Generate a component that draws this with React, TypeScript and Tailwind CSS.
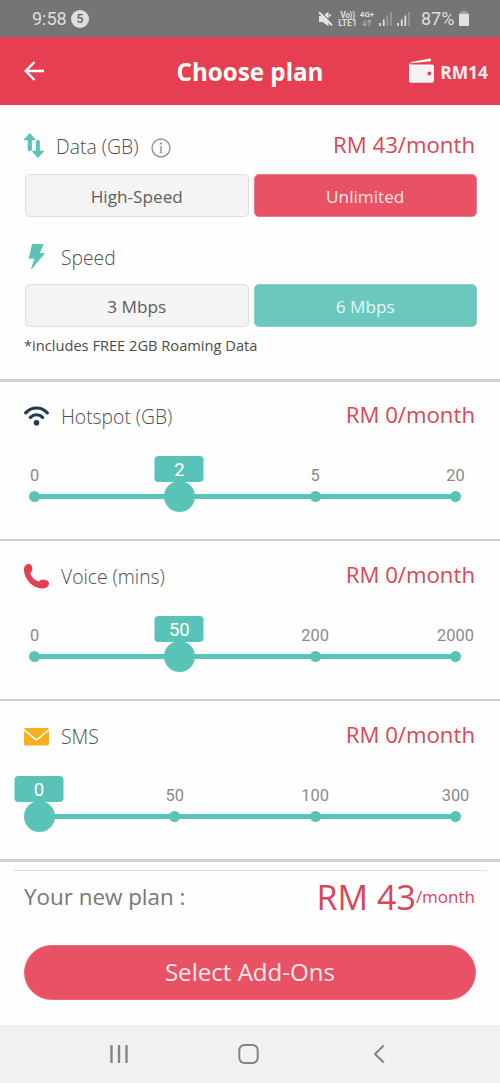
import type { ReactNode } from "react";

const sans = "font-['Open_Sans',sans-serif]";
const roboto = "font-['Roboto',sans-serif]";

function MutedIcon() {
  return (
    <svg width="15" height="16" viewBox="0 0 15 16" className="shrink-0">
      <path d="M1 5h3.5L10.5 0.8v14.4L4.5 11H1z" fill="#e2e2e2" />
      <path d="M2.2 0.4l12.4 12.4" stroke="#757575" strokeWidth="1.2" />
      <path d="M1 1.2l13 13" stroke="#e2e2e2" strokeWidth="2" />
      <path d="M12.8 3.2l-2 2.6" stroke="#e2e2e2" strokeWidth="1.4" />
    </svg>
  );
}

function Signal({ bright }: { bright: number }) {
  return (
    <svg width="14" height="15" viewBox="0 0 14 15" className="shrink-0">
      {[3, 6.5, 10.5, 14].map((h, i) => (
        <rect key={h} x={0.3 + i * 3.6} y={15 - h} width="1.7" height={h} fill={i < bright ? "#e2e2e2" : "#9b9b9b"} />
      ))}
    </svg>
  );
}

function StatusBar() {
  return (
    <div className={`flex h-[37px] items-center bg-[#757575] pl-8 text-[#dedede] ${roboto}`}>
      <span className="w-[35px] text-[18px] leading-none">9:58</span>
      <span className="ml-1 flex size-[18px] items-center justify-center rounded-full bg-[#dedede] text-[12px] font-medium leading-none text-[#606060]">
        5
      </span>
      <div className="ml-auto flex items-center pr-[31px]">
        <MutedIcon />
        <div className="ml-[5px] flex w-[19px] flex-col items-center text-[8.5px] font-bold leading-[8px]">
          <span className="whitespace-nowrap tracking-[-0.4px]">Vo))</span>
          <span className="whitespace-nowrap">LTE1</span>
        </div>
        <div className="ml-[2px] flex w-[16px] flex-col items-center text-[8px] font-bold leading-[8px]">
          <span>4G+</span>
          <svg width="10" height="8" viewBox="0 0 10 8" fill="none" stroke="#a8a8a8" strokeWidth="1.2">
            <path d="M2.7 1v5.5M0.6 4.5l2.1 2.1 2.1-2.1M7.3 7V1.3M5.2 3.4l2.1-2.1 2.1 2.1" />
          </svg>
        </div>
        <div className="ml-[4px] flex gap-[4px]">
          <Signal bright={2} />
          <Signal bright={3} />
        </div>
        <span className="ml-[10px] w-[34px] whitespace-nowrap text-[18px] leading-none">87%</span>
        <svg width="10" height="15" viewBox="0 0 10 15" className="ml-[4px]">
          <path d="M2.5 0h5v1.5h2v3h-9v-3h2z" fill="#a6a6a6" />
          <rect y="3" width="10" height="12" rx="1" fill="#e0e0e0" />
        </svg>
      </div>
    </div>
  );
}

function Header() {
  return (
    <header className="grid h-[68px] grid-cols-[1fr_auto_1fr] items-center bg-[#e73f52] text-white">
      <svg width="20" height="20" viewBox="0 0 20 20" className="ml-6" fill="none" stroke="white" strokeWidth="2.3">
        <path d="M20 10H2M10.5 1L1.7 10l8.8 9" />
      </svg>
      <h1 className="pt-px text-[24.2px] font-bold leading-8">Choose plan</h1>
      <div className="flex items-center justify-end gap-[6px] pr-3">
        <svg width="25" height="26" viewBox="0 0 25 26">
          <path d="M1 4.2L20.6 0.6c0.7-0.1 1.2 0.3 1.3 1l0.2 1.6L3 5.2z" fill="#f4f4f4" />
          <path
            fillRule="evenodd"
            d="M0 4.2C0.3 5.8 1.2 6.4 3 6.4h20c1.2 0 2 0.8 2 2v14.2c0 1.4-0.8 2.2-2.2 2.2H2.4C0.9 24.8 0 24 0 22.4zM20.3 13.6a1.9 1.9 0 1 0 0 3.8 1.9 1.9 0 0 0 0-3.8z"
            fill="#f4f4f4"
          />
        </svg>
        <span className="pt-[2px] text-[17.4px] font-bold leading-6 text-[#fdeef0]">RM14</span>
      </div>
    </header>
  );
}

function Option({ label, tone }: { label: string; tone: "idle" | "red" | "teal" }) {
  const tones = {
    idle: "border-[#dedede] bg-[#f4f4f4] text-[#606060]",
    red: "border-[#ea7d8b] bg-[#e95264] text-[#fde3e6]",
    teal: "border-[#8cccc4] bg-[#6ac8be] text-[#e6f8f5]",
  };
  return (
    <button className={`flex h-[43px] items-center justify-center rounded-[5px] border pt-[2px] text-[17.2px] ${tones[tone]}`}>
      {label}
    </button>
  );
}

function Price({ children }: { children: ReactNode }) {
  return <span className="text-[22.2px] leading-[26px] text-[#dc4558]">{children}</span>;
}

const TICKS = ["left-0", "left-1/3", "left-2/3", "left-full"];

function Slider({ values, active }: { values: string[]; active: number }) {
  return (
    <div className={`relative ml-[34.5px] mr-[44.5px] ${roboto}`}>
      <div className="flex h-5 justify-between">
        {values.map((v, i) => (
          <span key={v} className="flex w-0 justify-center pt-px text-[16.4px] leading-5 text-[#8a8a8a]">
            {i === active ? "" : v}
          </span>
        ))}
      </div>
      <div className="mt-[9px] flex h-[5px] items-center justify-between bg-[#59c3b8]">
        {values.map((v) => (
          <span key={v} className="flex w-0 justify-center">
            <span className="size-[11px] shrink-0 rounded-full bg-[#59c3b8]" />
          </span>
        ))}
      </div>
      <div className={`absolute -top-[9px] ${TICKS[active]}`}>
        <div className="flex w-0 flex-col items-center">
          <span className="flex h-[26px] w-[49px] shrink-0 translate-x-[4.5px] items-center justify-center rounded-[4px] bg-[#59c3b8] pt-[2px] text-[18.5px] leading-none text-white">
            {values[active]}
          </span>
          <span className="-mt-[1px] size-[31px] shrink-0 translate-x-[5px] rounded-full bg-[#59c3b8]" />
        </div>
      </div>
    </div>
  );
}

function SliderSection({
  icon,
  title,
  values,
  active,
  size,
}: {
  icon: ReactNode;
  title: string;
  values: string[];
  active: number;
  size: string;
}) {
  return (
    <section className={`border-[#d0d0d0] ${size}`}>
      <div className="flex h-7 items-center pl-6 pr-[25px]">
        {icon}
        <span className="ml-[12px] mr-auto pt-[3px] text-[19.3px] font-light leading-7 text-[#505050]">{title}</span>
        <Price>RM 0/month</Price>
      </div>
      <div className="pt-[36px]">
        <Slider values={values} active={active} />
      </div>
    </section>
  );
}

const wifi = (
  <svg width="25" height="20" viewBox="0 0 25 20" fill="none" stroke="#22394d" strokeWidth="3.2" strokeLinecap="round" className="mt-px">
    <path d="M1.7 6.8C7.8 0.4 17.2 0.4 23.3 6.8M6.4 11.3c3.3-3.4 8.9-3.4 12.2 0" />
    <circle cx="12.5" cy="16.8" r="2.8" fill="#22394d" stroke="none" />
  </svg>
);

const phone = (
  <svg width="25" height="25" viewBox="0 0 25 25" className="mt-[3px]">
    <path
      d="M2.5 0.6C4.2-0.3 6.3-0.1 7.3 1.3c0.9 1.3 1.3 3.8 0.9 5.3-0.3 1.2-1.5 1.6-1.9 2.6 0.8 3.4 4.3 7 8.5 8.2 1-0.4 1.6-1.4 2.9-1.6 2-0.2 4.5 0.1 6.1 1.2 1.4 1 1.5 2.9 0.7 4.5-1 2-3.4 2.9-6.2 2.9C8.5 24.3 0 14.8 0 5.8 0 3.4 0.8 1.5 2.5 0.6z"
      fill="#e73f52"
    />
  </svg>
);

const mail = (
  <svg width="25" height="18" viewBox="0 0 25 18" className="mt-[3px]">
    <rect width="25" height="17.5" rx="1.5" fill="#f8b01e" />
    <path d="M0 1.8l11.7 9.6c0.5 0.4 1.1 0.4 1.6 0L25 1.8" fill="none" stroke="white" strokeWidth="1.6" />
  </svg>
);

export default function App() {
  return (
    <div className={`flex h-[1083px] w-[500px] flex-col overflow-hidden bg-[#fefefe] ${sans}`}>
      <StatusBar />
      <Header />

      <section className="h-[277px] border-b-[3px] border-[#d0d0d0] pl-[25px] pr-[23px] pt-[26px]">
        <div className="-ml-px flex h-7 items-center pr-[2px]">
          <svg width="20" height="25" viewBox="0 0 20 25" fill="#59c3b8" className="mt-px">
            <path d="M5.7 0l5.7 6.2c0.4 0.5 0.1 1-0.5 1H7.9v9c0 1.2-1 2-2.1 2s-2.1-0.8-2.1-2v-9H0.6C0 7.2-0.3 6.7 0.1 6.2z" />
            <path d="M13.9 25l-5.6-6.2c-0.4-0.5-0.1-1 0.5-1h3.1V9c0-1.2 0.8-2 2-2s2 0.8 2 2v8.8h3.3c0.6 0 0.9 0.5 0.5 1z" />
          </svg>
          <span className="ml-[12px] mt-[4px] text-[19.4px] font-light leading-7 text-[#505050]">Data (GB)</span>
          <svg width="20" height="20" viewBox="0 0 20 20" fill="none" stroke="#949494" className="ml-[12px] mr-auto mt-[6px]">
            <circle cx="10" cy="10" r="9" strokeWidth="1.4" />
            <path d="M10 8.2v6.3" strokeWidth="1.5" />
            <path d="M8.6 8.6h1.4M8.6 14.5h2.8" strokeWidth="0.9" />
            <circle cx="10" cy="5.6" r="1.1" fill="#949494" stroke="none" />
          </svg>
          <Price>RM 43/month</Price>
        </div>
        <div className="mt-[15px] grid grid-cols-2 gap-[5px]">
          <Option label="High-Speed" tone="idle" />
          <Option label="Unlimited" tone="red" />
        </div>
        <div className="mt-[26px] flex h-7 items-center pl-[3px]">
          <svg width="17" height="25" viewBox="0 0 17 25" fill="#59c3b8" className="-mt-px">
            <path d="M4.8 0h9.8c0.6 0 0.8 0.4 0.6 0.9L11.8 9h4c0.7 0 0.9 0.5 0.5 1L4.2 24.6c-0.6 0.7-1.3 0.4-1-0.5L6.5 14.8H1.6C1 14.8 0.7 14.3 0.9 13.8L3.9 0.7C4 0.2 4.3 0 4.8 0z" />
          </svg>
          <span className="ml-[16px] mt-px text-[19.3px] font-light leading-7 text-[#505050]">Speed</span>
        </div>
        <div className="mt-[13px] grid grid-cols-2 gap-[5px]">
          <Option label="3 Mbps" tone="idle" />
          <Option label="6 Mbps" tone="teal" />
        </div>
        <p className="-ml-px mt-[8px] text-[14.65px] leading-5 text-[#4c4c4c]">*includes FREE 2GB Roaming Data</p>
      </section>

      <SliderSection icon={wifi} title="Hotspot (GB)" values={["0", "2", "5", "20"]} active={1} size="h-[159px] border-b-2 pt-[19px]" />
      <SliderSection icon={phone} title="Voice (mins)" values={["0", "50", "200", "2000"]} active={1} size="h-[160px] border-b-2 pt-[20px]" />
      <SliderSection icon={mail} title="SMS" values={["0", "50", "100", "300"]} active={0} size="h-[161px] border-b-[3px] pt-[20px]" />

      <footer className="flex h-[163px] flex-col pt-2">
        <div className="mx-[13px] flex h-[56px] items-center justify-between border-t border-[#e2e2e2] pb-[4px] pl-[11px] pr-3">
          <span className="text-[22.4px] leading-8 text-[#777777]">Your new plan :</span>
          <span className="flex items-center text-[#dc4558]">
            <span className="text-[34px] leading-none">RM 43</span>
            <span className="text-[17px] leading-none">/month</span>
          </span>
        </div>
        <button className="mx-6 mt-[19px] flex h-[55px] items-center justify-center rounded-full border border-[#ea6b7a] bg-[#e95264] text-[24.1px] text-[#fde9eb]">
          Select Add-Ons
        </button>
      </footer>

      <nav className="flex h-[58px] items-center bg-[#f1f1f1] pl-[110px]">
        <svg width="18" height="18" viewBox="0 0 18 18" fill="none" stroke="#858585" strokeWidth="2.4" strokeLinecap="round">
          <path d="M1.5 1v16M9 1v16M16.5 1v16" />
        </svg>
        <svg width="21" height="20" viewBox="0 0 21 20" fill="none" stroke="#858585" strokeWidth="2" className="ml-[110px]">
          <rect x="1.3" y="1" width="18.4" height="18" rx="5.2" />
        </svg>
        <svg width="12" height="20" viewBox="0 0 12 20" fill="none" stroke="#858585" strokeWidth="2" className="ml-[114px]">
          <path d="M10.7 1.5L2 10l8.7 8.5" />
        </svg>
      </nav>
    </div>
  );
}
